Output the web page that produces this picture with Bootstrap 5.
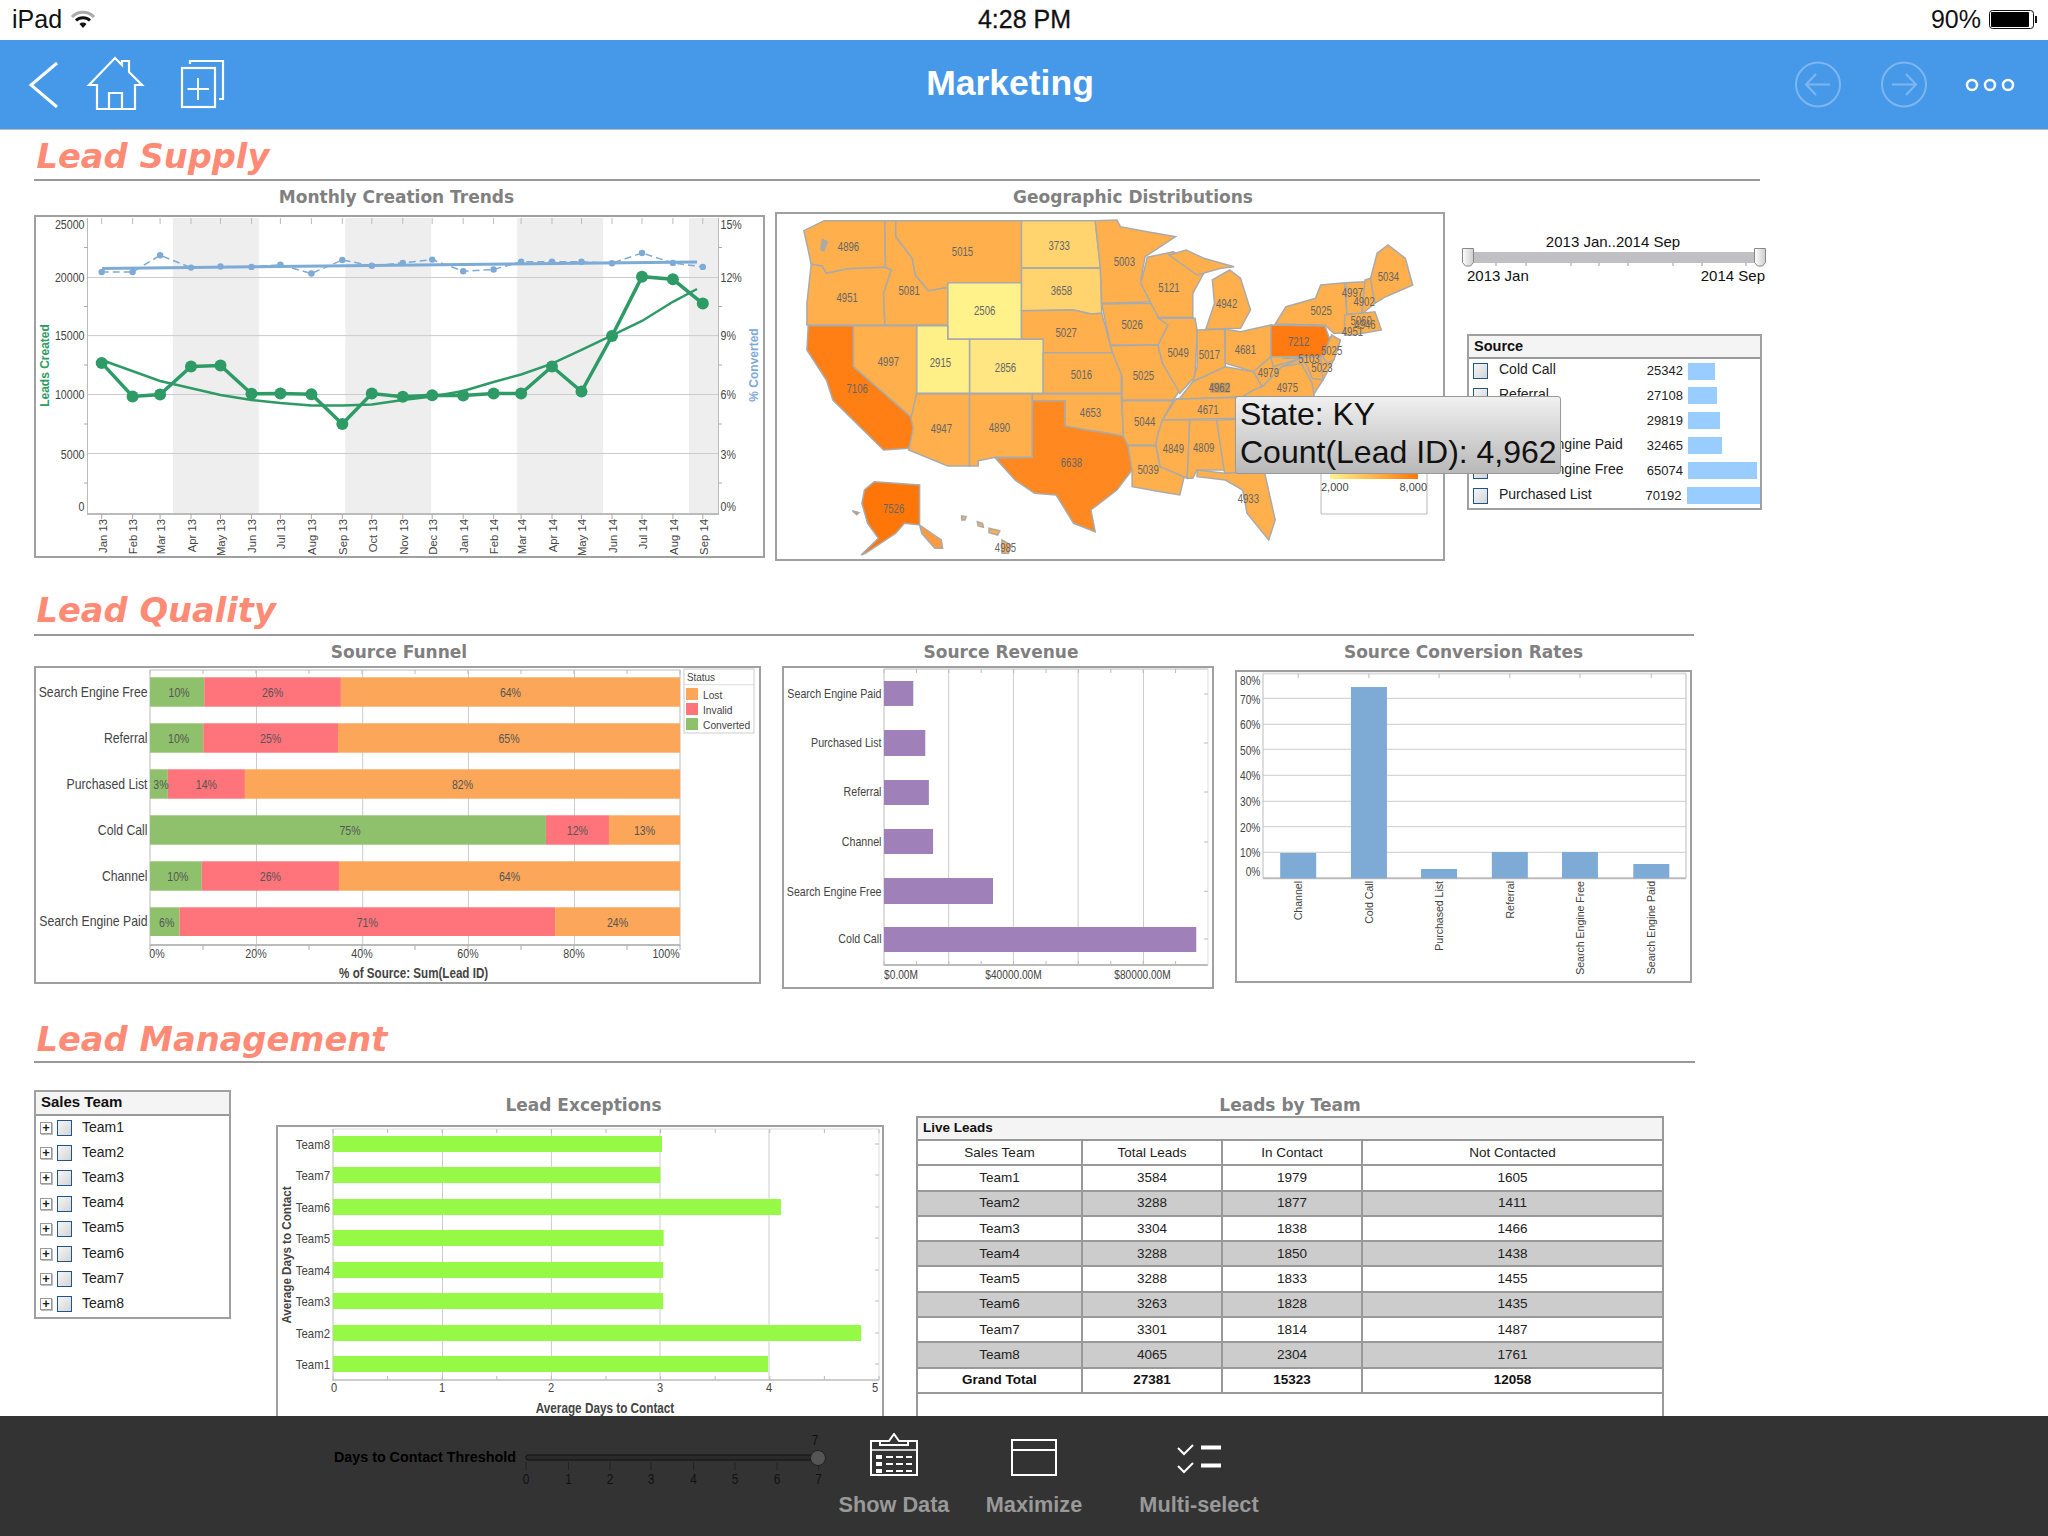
<!DOCTYPE html>
<html lang="en">
<head>
<meta charset="UTF-8">
<title>Marketing</title>
<link href="https://cdn.jsdelivr.net/npm/bootstrap@5.3.0/dist/css/bootstrap.min.css" rel="stylesheet">
<style>
    html, body { height: 1536px; overflow: hidden; }
    body { position: relative; background: #fff; font-family: "Liberation Sans", Arial, sans-serif; color: #111; }

    /* top */
    .status-bar { height: 40px; padding: 0 11px 0 12px; font-size: 25px; color: #111; }
    .status-bar > div { flex: 1 1 0; }
    .clock-text { font-weight: 500; -webkit-text-stroke: .3px #111; }
    .app-nav { height: 90px; padding: 0; background: #4698e9; border-bottom: 1px solid #bbb; flex-wrap: nowrap; }
    .app-title { color: #fff; font-weight: 700; font-size: 35.5px; line-height: 1; margin-top: -1px; }

    /* sections */
    .dash-main { padding-left: 34px; }
    .sec-head { font-family: "DejaVu Sans", sans-serif; font-weight: 700; font-style: italic; color: #ff8a75; font-size: 33.7px; border-bottom: 2px solid #999; margin: 0; padding-left: 2.5px; display: flex; align-items: flex-end; line-height: 1; }
    .sec-supply { height: 51px; width: 1726px; padding-bottom: 5px; }
    .sec-quality { height: 75px; width: 1660px; padding-bottom: 6px; }
    .sec-manage { height: 74px; width: 1661px; padding-bottom: 4px; }

    .panel-title { font-family: "DejaVu Sans", sans-serif; font-weight: 700; font-size: 17px; color: #808080; text-align: center; line-height: 32px; white-space: nowrap; }
    .chart-frame { border: 2px solid #a0a0a0; background: #fff; }
    .chart-frame svg { display: block; }
    svg text { font-family: "Liberation Sans", Arial, sans-serif; }

    .pn-trend { width: 731px; } .pn-trend .panel-title { height: 34px; padding-right: 6px; }
    .pn-geo { width: 670px; margin-left: 10px; } .pn-geo .panel-title { height: 31px; padding-left: 46px; }
    .pn-side { width: 310px; margin-left: 17px; margin-top: 50px; }
    .pn-funnel { width: 727px; } .pn-funnel .panel-title { height: 30px; padding-left: 3px; }
    .pn-revenue { width: 432px; margin-left: 21px; } .pn-revenue .panel-title { height: 30px; padding-left: 6px; }
    .pn-rate { width: 457px; margin-left: 21px; } .pn-rate .panel-title { height: 34px; }
    .pn-team { width: 197px; margin-top: 27px; }
    .pn-except { width: 608px; margin-left: 45px; } .pn-except .panel-title { height: 62px; padding-top: 26px; padding-left: 7px; }
    .pn-leads { width: 748px; margin-left: 32px; } .pn-leads .panel-title { height: 53px; padding-top: 26px; }

    /* filter lists */
    .list-card { border: 2px solid #a0a0a0; border-radius: 0; background: #fff; }
    .list-card .card-header { height: 25px; padding: 0 5px; background: #f4f4f4; border-bottom: 2px solid #999; border-radius: 0; font-weight: 700; font-size: 15px; line-height: 20px; color: #111; }
    .list-card .list-group-item { border: 0; padding: 0; background: transparent; font-size: 14px; color: #222; display: flex; align-items: center; }
    .card-source { width: 295px; height: 176px; margin-left: 5px; margin-top: 43px; }
    .card-source .card-header { font-size: 14.5px; }
    .card-source .list-group-item { height: 24.9px; padding-left: 4px; }
    .card-team { width: 197px; height: 229px; }
    .card-team .card-header { height: 27px; }
    .card-team .list-group-item { height: 25.2px; padding-left: 4px; }
    .tick-box { width: 15px; height: 16px; border: 1.5px solid #20558c; background: linear-gradient(135deg, #f6f6f6, #d4d4d4); flex: none; }
    .grow-box { width: 12px; height: 12px; border: 1px solid #999; background: #fff; color: #222; font-size: 13px; font-weight: 700; line-height: 9px; text-align: center; flex: none; margin-right: 5px; box-shadow: 1px 1px 0 #bbb; }
    .src-name { width: 140px; margin-left: 11px; margin-top: -3px; white-space: nowrap; }
    .src-num { width: 44px; font-size: 13px; text-align: right; }
    .src-bar { height: 17px; background: #99ccff; margin-left: 5px; }
    .team-name { margin-left: 10px; margin-top: -2px; }

    /* table */
    .leads-box { border: 2px solid #999; border-top: 0; height: 304px; background: #fff; }
    .leads-table { table-layout: fixed; width: 744px; margin: 0; font-size: 13.5px; --bs-table-border-color: #999; border-color: #999; }
    .leads-table td, .leads-table th { padding: 0; height: 25.3px; line-height: 22px; text-align: center; border-width: 2px; vertical-align: middle; font-weight: 400; color: #222; }
    .leads-table td:first-child { border-left: 0; }
    .leads-table td:last-child { border-right: 0; }
    .leads-table th.live-cap { height: 23px; line-height: 20px; text-align: left; padding-left: 5px; vertical-align: top; font-weight: 700; background: #f4f4f4; border-left: 0; border-right: 0; border-top: 2px solid #999; color: #111; }
    .leads-table tr.alt-row td { background: #ccc; }
    .leads-table tr.sum-row td { font-weight: 700; color: #111; }

    /* tooltip over the map */
    .map-tip { position: absolute; left: 1235px; top: 396px; width: 326px; height: 78px; padding: 0 4px 0 4px; background: linear-gradient(#f0f0f0, #b8b8b8); border: 1px solid #999; border-radius: 3px; font-size: 32px; line-height: 38px; color: #111; white-space: nowrap; }
    .map-tip > div { margin-top: -2px; }

    /* bottom bar */
    .tool-bar { position: absolute; left: 0; right: 0; bottom: 0; height: 120px; background: #333; }
    .thresh-wrap { width: 834px; padding-left: 334px; padding-top: 14px; }
    .thresh-label { font-size: 14.3px; font-weight: 700; color: #000; white-space: nowrap; width: 186px; margin-top: 17px; }
    .tool-btn { color: #999; font-size: 21.7px; font-weight: 700; padding: 0; border: 0; border-radius: 0; line-height: 1; height: 120px; padding-top: 17px; }
    .tool-btn:hover { color: #999; }
    .tool-btn svg { display: block; margin-bottom: 17px; }
    .tb-show { width: 120px; } .tb-max { width: 160px; } .tb-multi { width: 170px; }
</style>
</head>
<body>
    <!-- status bar -->
    <div class="status-bar d-flex align-items-center">
        <div class="d-flex align-items-center gap-2">
            <span>iPad</span>
            <svg width="26" height="20" viewBox="0 0 26 20">
                <path d="M2 7 A15 15 0 0 1 24 7" fill="none" stroke="#aaa" stroke-width="3"/>
                <path d="M6 10.5 A10 10 0 0 1 20 10.5" fill="none" stroke="#111" stroke-width="3"/>
                <path d="M9.5 14 A5 5 0 0 1 16.5 14 L13 18 Z" fill="#111"/>
            </svg>
        </div>
        <div class="text-center clock-text">4:28 PM</div>
        <div class="d-flex align-items-center justify-content-end gap-2">
            <span>90%</span>
            <svg width="48" height="20" viewBox="0 0 48 20">
                <rect x="0.5" y="0.5" width="44" height="18" rx="3" fill="#fff" stroke="#111"/>
                <rect x="2" y="2" width="38" height="15" rx="1" fill="#000"/>
                <path d="M46 6 h2 v7 h-2 z" fill="#111"/>
            </svg>
        </div>
    </div>

    <!-- app header -->
    <nav class="navbar app-nav d-flex align-items-stretch">
        <svg width="240" height="89" viewBox="0 40 240 89" fill="none" stroke="#fff" stroke-width="2.2">
            <path d="M57 63 L31 85 L57 107" stroke-width="3"/>
            <path d="M89 85 L115 58 L122 65 V61 H129 V72 L142 85 H135 V109 H97 V85 Z"/>
            <path d="M109 109 V93 H122 V109"/>
            <rect x="182" y="68" width="33" height="39"/>
            <path d="M190 64 V61 H223 V99 H219"/>
            <path d="M187.500 89 H209 M198 78 V100" stroke-width="1.800"/>
        </svg>
        <div class="flex-grow-1 d-flex align-items-center justify-content-center app-title">Marketing</div>
        <svg width="268" height="89" viewBox="1780 40 268 89" fill="none">
            <g stroke="#7eb6f0" stroke-width="2">
                <circle cx="1818" cy="84.500" r="22"/>
                <path d="M1806 84.500 H1830 M1816 74 L1806 84.500 L1816 95"/>
                <circle cx="1904" cy="84.500" r="22"/>
                <path d="M1892 84.500 H1916 M1906 74 L1916 84.500 L1906 95"/>
            </g>
            <g stroke="#fff" stroke-width="2.500">
                <circle cx="1972" cy="85" r="5"/>
                <circle cx="1990" cy="85" r="5"/>
                <circle cx="2008" cy="85" r="5"/>
            </g>
        </svg>
    </nav>

    <main class="dash-main">
        <h2 class="sec-head sec-supply">Lead Supply</h2>
        <div class="d-flex align-items-start">
            <div class="pn-trend">
                <div class="panel-title">Monthly Creation Trends</div>
                <div class="chart-frame" id="chartTrend"></div>
            </div>
            <div class="pn-geo">
                <div class="panel-title">Geographic Distributions</div>
                <div class="chart-frame" id="chartMap"></div>
            </div>
            <div class="pn-side">
                <div id="rangeSlider"></div>
                <div class="card list-card card-source">
                    <div class="card-header">Source</div>
                    <ul class="list-group list-group-flush" id="sourceList"></ul>
                </div>
            </div>
        </div>

        <h2 class="sec-head sec-quality">Lead Quality</h2>
        <div class="d-flex align-items-start">
            <div class="pn-funnel">
                <div class="panel-title">Source Funnel</div>
                <div class="chart-frame" id="chartFunnel"></div>
            </div>
            <div class="pn-revenue">
                <div class="panel-title">Source Revenue</div>
                <div class="chart-frame" id="chartRevenue"></div>
            </div>
            <div class="pn-rate">
                <div class="panel-title">Source Conversion Rates</div>
                <div class="chart-frame" id="chartRate"></div>
            </div>
        </div>

        <h2 class="sec-head sec-manage">Lead Management</h2>
        <div class="d-flex align-items-start">
            <div class="pn-team">
                <div class="card list-card card-team">
                    <div class="card-header">Sales Team</div>
                    <ul class="list-group list-group-flush" id="teamList"></ul>
                </div>
            </div>
            <div class="pn-except">
                <div class="panel-title">Lead Exceptions</div>
                <div class="chart-frame" id="chartExcept"></div>
            </div>
            <div class="pn-leads">
                <div class="panel-title">Leads by Team</div>
                <div class="leads-box">
                    <table class="table table-bordered leads-table">
                        <colgroup><col style="width:164px"><col style="width:140px"><col style="width:140px"><col></colgroup>
                        <thead>
                            <tr><th colspan="4" class="live-cap">Live Leads</th></tr>
                        </thead>
                        <tbody>
                            <tr><td>Sales Team</td><td>Total Leads</td><td>In Contact</td><td>Not Contacted</td></tr>
                            <tr><td>Team1</td><td>3584</td><td>1979</td><td>1605</td></tr>
                            <tr class="alt-row"><td>Team2</td><td>3288</td><td>1877</td><td>1411</td></tr>
                            <tr><td>Team3</td><td>3304</td><td>1838</td><td>1466</td></tr>
                            <tr class="alt-row"><td>Team4</td><td>3288</td><td>1850</td><td>1438</td></tr>
                            <tr><td>Team5</td><td>3288</td><td>1833</td><td>1455</td></tr>
                            <tr class="alt-row"><td>Team6</td><td>3263</td><td>1828</td><td>1435</td></tr>
                            <tr><td>Team7</td><td>3301</td><td>1814</td><td>1487</td></tr>
                            <tr class="alt-row"><td>Team8</td><td>4065</td><td>2304</td><td>1761</td></tr>
                            <tr class="sum-row"><td>Grand Total</td><td>27381</td><td>15323</td><td>12058</td></tr>
                        </tbody>
                    </table>
                </div>
            </div>
        </div>
    </main>

    <div class="map-tip"><div>State: KY<br>Count(Lead ID): 4,962</div></div>

    <!-- bottom tool bar -->
    <div class="tool-bar d-flex">
        <div class="thresh-wrap d-flex align-items-start">
            <div class="thresh-label">Days to Contact Threshold</div>
            <div id="threshSlider"></div>
        </div>
        <button class="btn tool-btn tb-show d-flex flex-column align-items-center" type="button">
            <svg width="48" height="44" viewBox="871 1433 48 44" fill="none" stroke="#fff" stroke-width="2">
                <path d="M881 1441 H872 V1475 H918 V1441 H909"/>
                <path d="M881 1445 V1441 L890 1441 L895 1434 L900 1441 L909 1441 V1445 Z"/>
                <path d="M872 1450 H918" stroke-width="1.500"/>
                <path d="M877 1455 h6 v4 h-6 z M877 1462 h6 v4 h-6 z M877 1469 h6 v4 h-6 z" fill="#fff" stroke="none"/>
                <path d="M887 1457 H913 M887 1464 H913 M887 1471 H913" stroke-dasharray="7 3"/>
            </svg>
            Show Data
        </button>
        <button class="btn tool-btn tb-max d-flex flex-column align-items-center" type="button">
            <svg width="46" height="44" viewBox="1012 1433 46 44" fill="none" stroke="#fff" stroke-width="2">
                <rect x="1013" y="1440" width="44" height="35"/>
                <path d="M1013 1450 H1057"/>
            </svg>
            Maximize
        </button>
        <button class="btn tool-btn tb-multi d-flex flex-column align-items-center" type="button">
            <svg width="46" height="44" viewBox="1177 1433 46 44" fill="none" stroke="#fff" stroke-width="2">
                <path d="M1179 1448 L1185 1454 L1194 1445 M1179 1466 L1185 1472 L1194 1463"/>
                <path d="M1202 1447.500 H1222 M1202 1465.500 H1222" stroke-width="4"/>
            </svg>
            Multi-select
        </button>
    </div>

    <script src="https://cdn.jsdelivr.net/npm/bootstrap@5.3.0/dist/js/bootstrap.bundle.min.js"></script>
    <script>
        // chart coordinates below are page pixels, each svg's viewBox is just its window on the page
        function lbl(x, y, s, o = {}) {
            const { a = 'middle', size = 11, fill = '#444', w = 'normal', sx = 1, rot = 0 } = o;
            let tf = `translate(${x} ${y})`;
            if (rot) tf += ` rotate(${rot})`;
            if (sx !== 1) tf += ` scale(${sx} 1)`;
            return `<text transform="${tf}" text-anchor="${a}" dominant-baseline="central" font-size="${size}" fill="${fill}" font-weight="${w}">${s}</text>`;
        }
        function line(x1, y1, x2, y2, c = '#ccc', sw = 1) {
            return `<line x1="${x1}" y1="${y1}" x2="${x2}" y2="${y2}" stroke="${c}" stroke-width="${sw}"/>`;
        }
        function rect(x, y, w, h, c) {
            return `<rect x="${x}" y="${y}" width="${w}" height="${h}" fill="${c}"/>`;
        }
        function mount(id, x, y, w, h, body) {
            document.getElementById(id).innerHTML =
                `<svg width="${w - 4}" height="${h - 4}" viewBox="${x + 2} ${y + 2} ${w - 4} ${h - 4}">${body}</svg>`;
        }

        // ---- monthly trend ----
        (function () {
            const months = ['Jan 13','Feb 13','Mar 13','Apr 13','May 13','Jun 13','Jul 13','Aug 13','Sep 13','Oct 13','Nov 13','Dec 13','Jan 14','Feb 14','Mar 14','Apr 14','May 14','Jun 14','Jul 14','Aug 14','Sep 14'];
            const xs = [101.7,132.6,160.1,191,220.5,251.5,280.4,311.4,342.3,371.8,402.8,432.2,463.2,493.6,521.1,552,581.5,612,642,672.9,702.8];
            const green = [362.9,396.4,394.5,366.5,365.5,393.8,393.5,394.2,424,393.5,396.7,395.3,395.6,393.5,393.5,366.5,391.6,336,276.7,279.3,303.6];
            const blue = [272,272,255.3,267.6,266.5,266.9,264.7,273.5,260,265.8,262.9,259.6,271.3,269.5,261.8,261.8,261.8,263.3,253,262.9,266.9];
            const trend = [[101.7,360],[160,381],[220.5,395],[251.5,400],[280.4,403],[311.4,405.5],[342.3,405.5],[371.8,404.4],[402.8,400],[432.2,396.4],[463.2,391],[493.6,382],[521.1,374.5],[552,363.6],[581.5,349.8],[612,335.3],[642,321],[672.9,301.8],[697,289]];
            let b = '';
            [[172.9,85.9],[345.3,85.9],[517.2,85.9],[689,29.6]].forEach(r => b += rect(r[0], 218, r[1], 296, '#eee'));
            [277.5,335.6,394.5,453.5].forEach(y => b += line(87, y, 719, y, '#ccc', 1));
            b += line(87.500, 218, 87.500, 515, '#bbb', 1) + line(718.500, 218, 718.500, 515, '#bbb', 1) + line(87, 514, 719, 514, '#bbb', 2);
            [247.500,306.500,365,424,483].forEach(y => b += line(84, y, 88, y, '#aaa') + line(718, y, 722, y, '#aaa'));
            xs.forEach(x => b += line(x, 218, x, 224, '#bbb') + line(x, 514, x, 519, '#aaa'));
            b += `<polyline points="${xs.map((x, i) => x + ',' + blue[i]).join(' ')}" fill="none" stroke="#7eaad6" stroke-width="1.500" stroke-dasharray="7 4"/>`;
            b += `<line x1="102" y1="268.500" x2="697" y2="262" stroke="#7eaad6" stroke-width="3"/>`;
            xs.forEach((x, i) => b += `<circle cx="${x}" cy="${blue[i]}" r="3.200" fill="#7eaad6"/>`);
            b += `<polyline points="${trend.map(p => p.join(',')).join(' ')}" fill="none" stroke="#2e9b66" stroke-width="2.500"/>`;
            b += `<polyline points="${xs.map((x, i) => x + ',' + green[i]).join(' ')}" fill="none" stroke="#2e9b66" stroke-width="3.500"/>`;
            xs.forEach((x, i) => b += `<circle cx="${x}" cy="${green[i]}" r="6" fill="#2e9b66"/>`);
            [['25000',225],['20000',277.5],['15000',335.6],['10000',395],['5000',454.5],['0',506.5]].forEach(l => b += lbl(84.5, l[1], l[0], { a: 'end', size: 13, sx: .82 }));
            [['15%',225],['12%',277.5],['9%',335.6],['6%',394.5],['3%',454.5],['0%',507]].forEach(l => b += lbl(720.5, l[1], l[0], { a: 'start', size: 13, sx: .82 }));
            months.forEach((m, i) => b += lbl(xs[i] + 1, 519, m, { a: 'end', rot: -90, size: 10.5, sx: 1.08 }));
            b += lbl(45, 365.5, 'Leads Created', { rot: -90, size: 12, w: 700, fill: '#2e9b66' });
            b += lbl(754, 365, '% Converted', { rot: -90, size: 12, w: 700, fill: '#7eaad6' });
            mount('chartTrend', 34, 215, 731, 343, b);
        })();

        // ---- state map, outline points were read off a 2.306 x 3 enlargement of the map area ----
        (function () {
            const mx = z => +(770 + z / 2.306).toFixed(1), my = z => +(170 + z / 3).toFixed(1);
            const base = '#ffb04d', low = '#ffd36e';
            const states = [
                [base,[1155,560,1295,500,1315,510,1300,570,1275,630,1250,680,1090,680,1115,605]],
                [base,[78,182,125,152,265,152,266,292,180,296,130,310,120,288,95,283,88,240]],
                [base,[95,283,120,288,130,310,180,296,266,292,280,300,262,370,265,465,85,465,85,400]],
                [base,[265,152,290,152,290,200,328,265,335,315,365,362,410,352,410,465,265,465,262,370,280,300,266,292]],
                [base,[290,152,580,152,580,338,410,338,410,352,365,362,335,315,328,265,290,200]],
                ['#fff28a',[410,338,580,338,580,508,410,508]],
                [low,[580,152,750,152,762,293,580,293]],
                [low,[580,295,762,295,765,430,740,432,700,420,580,422]],
                [base,[580,422,700,420,740,432,765,430,785,525,790,548,630,548,630,508,580,508]],
                ['#ffe682',[460,508,630,508,630,670,460,670]],
                ['#ffef87',[338,467,410,467,410,508,460,508,460,670,338,670]],
                [base,[192,467,338,467,338,670,328,745,192,590]],
                ['#ff7f14',[88,467,192,467,192,590,328,745,335,770,320,835,262,840,215,780,145,690,130,630,85,540]],
                [base,[338,672,460,672,460,888,410,888,320,840,330,775,325,745]],
                [base,[460,672,605,672,605,862,520,862,480,872,480,888,460,888]],
                [base,[630,548,790,548,810,595,810,670,630,670]],
                [base,[605,672,810,672,815,800,780,790,730,780,680,768,680,692,605,692]],
                ['#ff8820',[605,692,680,692,680,768,730,780,780,790,823,800,835,900,800,960,740,1020,750,1085,700,1060,660,975,610,970,565,930,520,865,605,862]],
                [base,[750,152,800,150,808,170,870,185,935,200,865,260,855,330,890,395,765,400,762,293]],
                [base,[765,402,890,400,918,465,895,525,785,525]],
                [base,[785,527,895,525,905,580,945,660,930,690,812,690,812,620,790,548]],
                [base,[812,692,930,692,905,750,895,790,890,825,825,825,815,800]],
                [base,[825,827,890,827,900,890,960,895,945,975,900,965,835,950,835,900]],
                [base,[870,262,930,245,975,275,1000,310,975,370,975,442,895,442,855,340]],
                [base,[895,445,980,445,985,480,980,620,945,670,905,580,895,525,918,465]],
                [base,[1020,330,1060,300,1085,325,1108,420,1085,475,1005,478,1025,400]],
                [base,[920,255,960,240,1000,265,1070,290,1040,295,985,315]],
                [base,[985,480,1048,478,1050,590,975,635,985,590]],
                [base,[1050,478,1085,485,1155,465,1155,560,1115,605,1050,580]],
                [base,[945,685,975,635,1050,590,1115,605,1135,650,1090,680,935,688]],
                [base,[905,750,935,688,1090,682,1150,680,1080,745]],
                [base,[895,790,905,750,968,750,962,925,900,890,890,825]],
                [base,[968,750,1030,750,1048,900,985,900,975,925,962,925]],
                [base,[1030,750,1090,748,1170,830,1160,910,1048,910]],
                [base,[985,900,1048,910,1140,905,1165,1050,1150,1110,1100,1030,1090,960,1050,930,985,920]],
                [base,[1090,680,1255,680,1265,720,1200,790,1160,780,1080,745]],
                [base,[1115,660,1135,650,1180,590,1225,580,1250,640,1255,680,1090,680]],
                [base,[1115,605,1155,560,1160,590,1225,565,1180,590,1135,650]],
                ['#ff7a10',[1155,465,1280,468,1295,525,1270,560,1155,560]],
                [base,[1190,410,1258,385,1270,345,1325,338,1330,430,1330,490,1300,490,1280,465,1165,462]],
                [base,[1295,495,1315,510,1300,570,1285,580,1275,560]],
                [base,[1180,565,1270,560,1275,630,1250,625,1240,590,1225,565]],
                [base,[1328,338,1372,335,1365,430,1330,432]],
                [base,[1372,330,1385,325,1395,400,1365,432]],
                [base,[1385,325,1400,250,1425,225,1465,265,1482,345,1420,380,1395,400]],
                [base,[1325,435,1395,425,1410,480,1345,495,1325,495]],
                ['#ff7608',[240,935,345,945,345,1065,310,1060,290,1090,220,1150,210,1155,250,1105,225,1060,212,1000,218,960]],
                ['#ff7608',[190,1022,205,1028,200,1034]],
                [base,[535,1110,555,1125,550,1150,535,1150]],
                [base,[505,1075,530,1082,525,1095,505,1088]],
                [base,[478,1055,490,1060,492,1072,480,1068]],
                [base,[442,1038,452,1040,450,1050,442,1050]],
                ['#ff9a40',[345,1065,395,1110,398,1135,380,1135,350,1090]]
            ];
            const nums = [[4896,181,229],[5015,444,244],[3733,667,227],[5003,817,274],[5121,920,352],[3658,672,363],[4951,178,382],[5081,321,362],[2506,495,421],[5026,835,463],[4942,1053,400],[5027,683,487],[4997,273,574],[2915,393,577],[2856,543,592],[5016,718,613],[5049,941,548],[5017,1013,553],[4681,1096,539],[5025,861,616],[7106,201,655],[7212,1219,515],[4979,1149,607],[4975,1193,652],[5023,1273,592],[5103,1243,566],[5025,1295,541],[4671,1010,718],[4653,739,727],[4947,395,775],[4890,529,772],[5044,864,754],[4849,930,835],[4809,1000,833],[6638,695,877],[5039,872,898],[4933,1103,985],[7526,285,1015],[4985,543,1132],[5025,1271,421],[4997,1343,367],[4902,1370,395],[5034,1426,319],[5060,1363,452],[4951,1343,484],[4946,1372,465]];
            let b = '';
            states.forEach(s => {
                const p = [];
                for (let i = 0; i < s[1].length; i += 2) p.push(mx(s[1][i]) + ',' + my(s[1][i + 1]));
                b += `<polygon points="${p.join(' ')}" fill="${s[0]}" stroke="#aaa" stroke-width="1.500"/>`;
            });
            b += `<path d="M${mx(120)} ${my(205)} L${mx(135)} ${my(215)} L${mx(125)} ${my(245)} L${mx(115)} ${my(240)} Z" fill="#aaa"/>`;
            // hovered state keeps a grey plate behind its number
            b += rect(mx(1015), my(638), 20, 10, '#c99a5c') + lbl(mx(1036), my(653), '4962', { size: 12, sx: .8, fill: '#666' });
            nums.forEach(n => b += lbl(mx(n[1]), my(n[2]), n[0], { size: 12, sx: .8, fill: '#666' }));
            // colour legend, mostly under the tooltip
            b += `<defs><linearGradient id="heat"><stop offset="0" stop-color="#fff28a"/><stop offset="1" stop-color="#ff7608"/></linearGradient></defs>`;
            b += `<path d="M1321 440 V514 H1427 V440" fill="#fff" stroke="#bbb"/>`;
            b += rect(1330, 472, 88, 7, 'url(#heat)');
            b += lbl(1321, 487, '2,000', { a: 'start', size: 11 }) + lbl(1427, 487, '8,000', { a: 'end', size: 11 });
            mount('chartMap', 775, 212, 670, 349, b);
        })();

        // ---- date range slider ----
        (function () {
            let b = `<defs><linearGradient id="knob" x1="0" x2="1"><stop offset="0" stop-color="#fff"/><stop offset="1" stop-color="#ccc"/></linearGradient></defs>`;
            b += lbl(1613, 242, '2013 Jan..2014 Sep', { size: 15, fill: '#111' });
            b += rect(1468, 253, 292, 11, '#bfbfc4');
            [1496,1526,1571,1599,1628,1673,1702,1746].forEach(x => b += line(x, 264, x, 267, '#999'));
            [1462,1754].forEach(x => b += `<path d="M${x + .5} 249.500 h11 v14 l-3 3.500 h-5 l-3 -3.500 z" fill="url(#knob)" stroke="#888"/>`);
            b += lbl(1467, 276, '2013 Jan', { a: 'start', size: 15, fill: '#111' }) + lbl(1765, 276, '2014 Sep', { a: 'end', size: 15, fill: '#111' });
            document.getElementById('rangeSlider').innerHTML = `<svg width="310" height="60" viewBox="1462 232 310 60" class="d-block">${b}</svg>`;
        })();

        // ---- source filter ----
        [['Cold Call',25342,27],['Referral',27108,29],['Channel',29819,32],['Search Engine Paid',32465,34],['Search Engine Free',65074,69],['Purchased List',70192,74]].forEach(r => {
            document.getElementById('sourceList').insertAdjacentHTML('beforeend',
                `<li class="list-group-item"><span class="tick-box"></span><span class="src-name">${r[0]}</span><span class="src-num">${r[1]}</span><span class="src-bar" style="width:${r[2]}px"></span></li>`);
        });
        for (let i = 1; i <= 8; i++) {
            document.getElementById('teamList').insertAdjacentHTML('beforeend',
                `<li class="list-group-item"><span class="grow-box">+</span><span class="tick-box"></span><span class="team-name">Team${i}</span></li>`);
        }

        // ---- source funnel ----
        (function () {
            const zx = z => 20 + z / 2.063;
            const rows = [
                ['Search Engine Free',692.7,677.3,29.4,[380,662],['10%','26%','64%']],
                ['Referral',738.7,723.3,29.4,[378,656],['10%','25%','65%']],
                ['Purchased List',784.7,769.3,29.4,[305,464],['3%','14%','82%']],
                ['Cold Call',830.7,815.3,29.4,[1085,1215],['75%','12%','13%']],
                ['Channel',876.7,861.3,29.4,[375,658],['10%','26%','64%']],
                ['Search Engine Paid',921.7,907.3,28.7,[329,1104],['6%','71%','24%']]
            ];
            let b = '';
            [256.5,362.7,468.4,574.5].forEach(x => b += line(x, 670, x, 945, '#ccc'));
            [150,680].forEach(x => b += line(x, 670, x, 946, '#bbb'));
            b += line(150, 670, 680, 670, '#ddd', 2) + line(150, 945, 680, 945, '#bbb', 2);
            for (let i = 0; i <= 10; i++) {
                const x = 150 + i * 53;
                b += line(x, 670, x, 674, '#bbb') + line(x, 945, x, 950, '#aaa');
            }
            rows.forEach(r => {
                const a = zx(r[4][0]), c = zx(r[4][1]);
                b += rect(150, r[2], a - 150, r[3], '#8fc06c') + rect(a, r[2], c - a, r[3], '#ff737b') + rect(c, r[2], 680 - c, r[3], '#fba659');
                const my = r[2] + r[3] / 2 + 1;
                b += lbl((150 + a) / 2 + 2, my, r[5][0], { size: 12, sx: .88, fill: '#555' });
                b += lbl((a + c) / 2, my, r[5][1], { size: 12, sx: .88, fill: '#555' });
                b += lbl((c + 680) / 2, my, r[5][2], { size: 12, sx: .88, fill: '#555' });
                b += lbl(147.5, r[1], r[0], { a: 'end', size: 14, sx: .875 });
            });
            [['0%',157],['20%',256],['40%',362],['60%',468],['80%',574],['100%',666]].forEach(l => b += lbl(l[1], 954, l[0], { size: 13, sx: .82 }));
            b += lbl(413.6, 972.7, '% of Source: Sum(Lead ID)', { size: 14, w: 700, sx: .83 });
            b += `<rect x="684" y="669" width="70" height="64" fill="#fff" stroke="#ccc"/>` + line(684, 684.7, 754, 684.7, '#ddd');
            b += lbl(687, 677.5, 'Status', { a: 'start', size: 11, sx: .9 });
            [['Lost','#fba659',688,694.7],['Invalid','#ff737b',703,709.7],['Converted','#8fc06c',718,724.7]].forEach(l => {
                b += rect(686, l[2], 12, 12, l[1]) + lbl(703, l[3], l[0], { a: 'start', size: 11, sx: .93 });
            });
            mount('chartFunnel', 34, 666, 727, 318, b);
        })();

        // ---- source revenue ----
        (function () {
            const zx = z => 770 + z / 1.668, zy = z => 630 + z / 3;
            const bars = [['Search Engine Paid',153,228,239,192],['Purchased List',300,378,259,339],['Referral',450,525,265,486],['Channel',597,672,272,636],['Search Engine Free',744,822,372,784],['Cold Call',891,966,711,927]];
            let b = '';
            [298,406,514,623].forEach(x => b += line(zx(x), 669, zx(x), 965, '#ccc'));
            b += line(884, 669, 884, 966, '#bbb') + line(884, 669, 1208, 669, '#ddd', 2) + line(884, 965, 1208, 965, '#bbb', 2) + line(1208, 669, 1208, 965, '#ddd');
            for (let i = 0; i <= 9; i++) { const x = 884 + i * 32.4; b += line(x, 669, x, 673, '#bbb') + line(x, 965, x, 961, '#bbb'); }
            bars.forEach(r => {
                b += rect(884, zy(r[1]), zx(r[3]) - 884, zy(r[2]) - zy(r[1]), '#a080b8');
                b += line(1204, zy(r[4]), 1208, zy(r[4]), '#bbb');
                b += lbl(881.5, zy(r[4]), r[0], { a: 'end', size: 13, sx: .82 });
            });
            [['$0.00M',901],['$40000.00M',1013.5],['$80000.00M',1142.5]].forEach(l => b += lbl(l[1], 973.7, l[0], { size: 13, sx: .78 }));
            mount('chartRevenue', 782, 666, 432, 323, b);
        })();

        // ---- conversion rates ----
        (function () {
            const zx = z => 770 + z / 1.668, zy = z => 630 + z / 3;
            let b = '';
            [698.3,724.3,749.3,775.3,801.3,826.7,852.3].forEach(y => b += line(1263, y, 1686, y, '#ccc'));
            b += line(1263, 673.5, 1686, 673.5, '#ddd', 2) + line(1263, 878.3, 1686, 878.3, '#bbb', 2) + line(1263, 673.5, 1263, 878.3, '#bbb') + line(1686, 673.5, 1686, 878.3, '#bbb');
            [[851,669,'Channel'],[969,171,'Cold Call'],[1086,717,'Purchased List'],[1204,666,'Referral'],[1321,666,'Search Engine Free'],[1440,702,'Search Engine Paid']].forEach(r => {
                b += rect(zx(r[0]), zy(r[1]), 36, 878.3 - zy(r[1]), '#7eaad6');
                b += line(zx(r[0] + 30), 673.5, zx(r[0] + 30), 678, '#bbb');
                b += lbl(zx(r[0] + 30), 881, r[2], { a: 'end', rot: -90, size: 11, sx: .96 });
            });
            [['80%',680.3],['70%',699.3],['60%',724.3],['50%',750.3],['40%',776],['30%',801.3],['20%',827.3],['10%',852.7],['0%',871.7]].forEach(l => b += lbl(1260.4, l[1], l[0], { a: 'end', size: 12, sx: .85 }));
            mount('chartRate', 1235, 670, 457, 313, b);
        })();

        // ---- lead exceptions ----
        (function () {
            const zx = z => 20 + z / 1.782, zy = z => 1020 + z / 3;
            const bars = [['Team8',348,1144],['Team7',441,1141],['Team6',537,1356],['Team5',630,1147],['Team4',726,1146],['Team3',819,1146],['Team2',915,1499],['Team1',1008,1333]];
            let b = '';
            [442.5,551.4,660,769].forEach(x => b += line(x, 1129, x, 1380, '#ccc'));
            b += line(333, 1129, 333, 1381, '#bbb') + line(333, 1129, 879, 1129, '#ddd') + line(333, 1380, 879, 1380, '#bbb', 1.500) + line(879, 1129, 879, 1380, '#ddd');
            for (let i = 0; i <= 10; i++) { const x = 333 + i * 54.6; b += line(x, 1129, x, 1133, '#bbb') + line(x, 1380, x, 1376, '#bbb'); }
            bars.forEach(r => {
                b += rect(333, zy(r[1]), zx(r[2]) - 333, 16, '#96f945');
                b += line(875, zy(r[1] + 24), 879, zy(r[1] + 24), '#bbb');
                b += lbl(330, zy(r[1] + 26), r[0], { a: 'end', size: 12, sx: .95 });
            });
            [[334,'0'],[442,'1'],[551,'2'],[660,'3'],[769,'4'],[875,'5']].forEach(l => b += lbl(l[0], 1388, l[1], { size: 13, sx: .85 }));
            b += lbl(605, 1408, 'Average Days to Contact', { size: 14, w: 700, sx: .84 });
            b += lbl(286.5, 1255, 'Average Days to Contact', { rot: -90, size: 12, w: 700, sx: .97 });
            mount('chartExcept', 276, 1125, 608, 300, b);
        })();

        // ---- threshold slider in the tool bar ----
        (function () {
            let b = '';
            b += `<rect x="526" y="1455" width="288" height="5" rx="2" fill="#2a2a2a" stroke="#111"/>`;
            [526,568.5,610,651,693.5,735,777,818.5].forEach((x, i) => {
                b += line(x, 1462, x, 1470, '#222') + lbl(x, 1479, i, { size: 14, fill: '#111', sx: .85 });
            });
            b += `<circle cx="818" cy="1458" r="7.500" fill="#555" stroke="#222"/>`;
            b += lbl(815, 1440, '7', { size: 14, fill: '#111', sx: .85 });
            document.getElementById('threshSlider').innerHTML = `<svg width="314" height="56" viewBox="520 1430 314 56" class="d-block">${b}</svg>`;
        })();
    </script>
</body>
</html>
